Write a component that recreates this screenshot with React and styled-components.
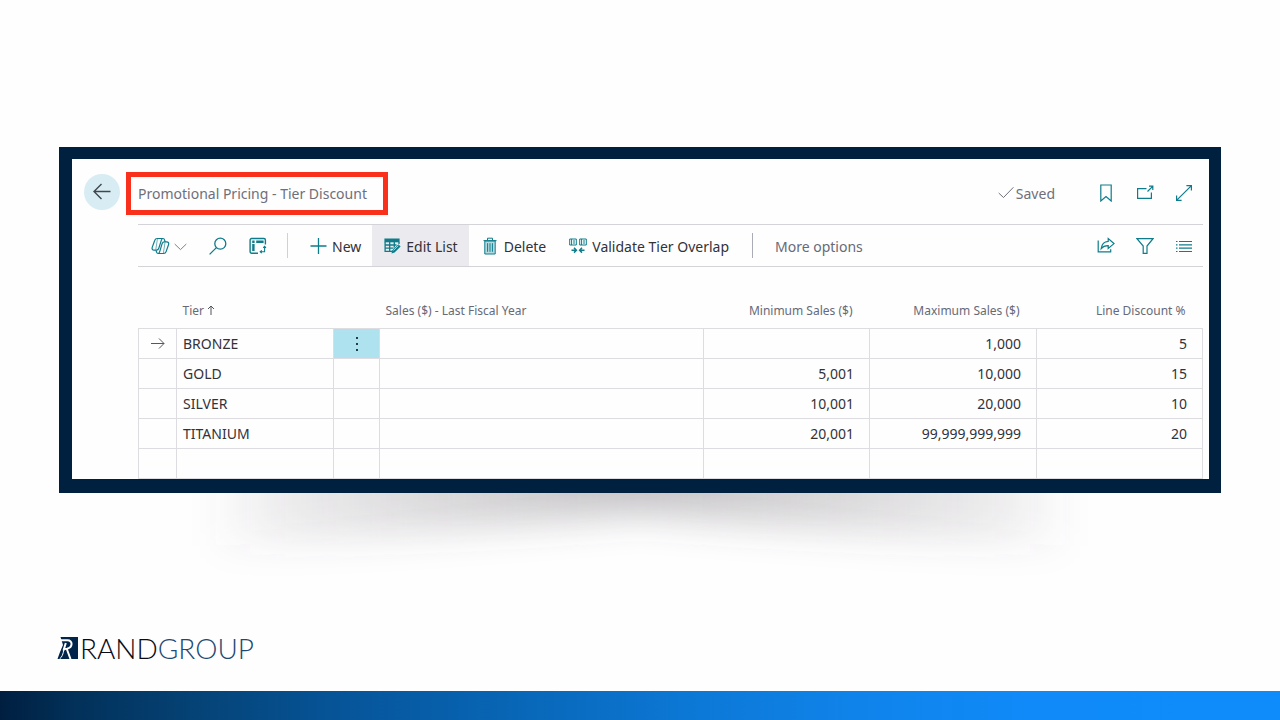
import React from 'react'
import styled, { createGlobalStyle } from 'styled-components'

const GlobalStyle = createGlobalStyle`
  * {
    box-sizing: border-box;
  }
  body {
    margin: 0;
    background: #fefefe;
    font-family: 'Noto Sans', 'Open Sans', sans-serif;
    font-size: 14px;
    color: #323239;
  }
`

const Page = styled.div`
  display: flex;
  flex-direction: column;
  min-height: 100vh;
  padding-top: 147px;
`

const Frame = styled.main`
  margin: 0 59px;
  border: solid #00203f;
  border-width: 12px 12px 14px 13px;
  background: #fefefe;
`

const TitleBar = styled.header`
  display: flex;
  align-items: center;
  height: 65px;
  padding: 0 16px 0 12px;
`

const BackButton = styled.button`
  display: flex;
  align-items: center;
  justify-content: center;
  width: 36px;
  height: 36px;
  margin-right: 6px;
  padding: 0;
  border: 0;
  border-radius: 50%;
  background: #d8ecf3;
  color: #41474d;
`

const Title = styled.h1`
  margin: 4px 0 0;
  padding: 0 16px 0 7px;
  border: 5px solid #f9301c;
  font-size: 14px;
  font-weight: 400;
  line-height: 33px;
  color: #6f6f7a;
`

const TitleActions = styled.div`
  display: flex;
  align-items: center;
  gap: 42px;
  margin-left: auto;
  padding-top: 3px;
`

const Status = styled.span`
  display: flex;
  align-items: center;
  gap: 2px;
  color: #6f6f7a;
`

const IconGroup = styled.div`
  display: flex;
  align-items: center;
  gap: 21px;
`

const IconButton = styled.button`
  display: flex;
  align-items: center;
  gap: 4px;
  padding: 0;
  border: 0;
  background: none;
  color: #0e7c8b;
`

const Content = styled.section`
  margin: 0 6px 0 66px;
`

const Toolbar = styled.div`
  display: flex;
  align-items: center;
  justify-content: space-between;
  height: 43px;
  padding-right: 10px;
  border: solid #d3d3d8;
  border-width: 1px 0;
`

const Actions = styled.div`
  display: flex;
  align-items: center;
  align-self: stretch;
`

const ToolGroup = styled.div`
  display: flex;
  align-items: center;
  gap: 22px;
  padding: 0 8px 0 13px;
`

const Divider = styled.span`
  width: 1px;
  height: 25px;
  margin: 0 10px 0 12px;
  background: ${(props) => props.$color || '#d0d0d6'};
`

const Action = styled.button`
  display: flex;
  align-items: center;
  gap: 5px;
  align-self: stretch;
  padding: 1px 11px 0 12px;
  border: 0;
  background: ${(props) => (props.$active ? '#ebeaef' : 'none')};
  font: inherit;
  color: ${(props) => (props.$muted ? '#666a78' : '#323239')};
  white-space: nowrap;

  svg {
    color: #0e7c8b;
  }
`

const Table = styled.table`
  width: 100%;
  margin-top: 27px;
  border-collapse: collapse;
  table-layout: fixed;
`

const Col = styled.col`
  width: ${(props) => props.$width};
`

const HeadCell = styled.th`
  height: 34px;
  padding: ${(props) => (props.$right ? '0 17px 0 0' : '0 0 0 6px')};
  text-align: ${(props) => (props.$right ? 'right' : 'left')};
  vertical-align: middle;
  font-size: 12px;
  font-weight: 400;
  line-height: 34px;
  color: #666a78;
  white-space: nowrap;
`

const Cell = styled.td`
  height: 30px;
  padding: ${(props) => (props.$right ? '0 15px 0 0' : '0 0 0 6px')};
  border: 1px solid #dddde1;
  text-align: ${(props) => (props.$right ? 'right' : 'left')};
  line-height: 29px;
`

const IconCell = styled(Cell)`
  padding: 0;
  text-align: center;
  background: ${(props) => (props.$selected ? '#aee2ee' : 'none')};

  svg {
    display: block;
    margin: auto;
  }
`

const MenuButton = styled.button`
  display: block;
  width: 100%;
  height: 29px;
  padding: 0;
  border: 0;
  background: none;
  color: #1f3d49;
`

const Shadow = styled.svg`
  display: block;
  width: 100%;
  height: 100px;
`

const Footer = styled.footer`
  margin-top: auto;
`

const Logo = styled.div`
  display: flex;
  align-items: center;
  gap: 1px;
  height: 30px;
  margin: 0 57px 28px;
  font-family: Lato, 'Liberation Sans', sans-serif;
  font-size: 28px;
  font-weight: 300;
  line-height: 30px;
  color: #0a0a12;
`

const LogoGroup = styled.span`
  color: #1d4a73;
`

const BottomBar = styled.div`
  height: 29px;
  background: linear-gradient(
    90deg,
    #001f40 0%,
    #02315a 6%,
    #054478 16%,
    #06559a 27%,
    #0866b6 40%,
    #0c78d6 54%,
    #1083ea 67%,
    #0f8af8 80%,
    #0f8cfb 100%
  );
`

const Icon = ({ w = 18, h = 18, stroke = 1, children }) => (
  <svg
    width={w}
    height={h}
    viewBox={`0 0 ${w} ${h}`}
    fill="none"
    stroke="currentColor"
    strokeWidth={stroke}
    aria-hidden="true"
  >
    {children}
  </svg>
)

const BackIcon = () => (
  <Icon stroke={1.4}>
    <path d="M17.500 8.500H1M8.500 1 1 8.500 8.500 16" />
  </Icon>
)

const CheckIcon = () => (
  <Icon w={16} h={14}>
    <path d="M.7 7 5.500 11.500 15.400 1.300" />
  </Icon>
)

const BookmarkIcon = () => (
  <Icon stroke={1.200}>
    <path d="M3.800 1h10.400v16L9 12.600 3.800 17z" />
  </Icon>
)

const PopoutIcon = () => (
  <Icon stroke={1.200}>
    <path d="M10.500 4.600H1.600v9.800h13.800V8.500M11.500 7.500l5.200-5.200M13 2.200h3.800V6" />
  </Icon>
)

const ExpandIcon = () => (
  <Icon stroke={1.200}>
    <path d="M1.800 16.200 16.200 1.800M11.400 1.600h5v5M1.600 11.400v5h5" />
  </Icon>
)

const CopilotIcon = () => (
  <Icon w={19} stroke={1.200}>
    <path d="M12 1.500H6.200C5 1.500 4.200 2.100 3.800 3.300L1.200 10.400c-.5 1.500.3 2.700 1.800 2.700h2.500c1.200 0 1.900-.7 2.300-1.900l2.500-7.800c.4-1.300.9-1.900 1.700-1.900s1.400.6 1.600 1.500l.5 1.800" />
    <path d="M7.200 16.500h5.500c1.200 0 2-.7 2.400-1.900l2.500-7.100c.5-1.500-.3-2.700-1.800-2.700h-2.400c-1.200 0-1.900.7-2.300 1.900l-2.400 7.900c-.3 1.200-.8 1.900-1.600 1.900s-1.300-.5-1.500-1.300l-.6-1.800" />
    <path d="M6.400 2 4.800 12.500M14 5.500 12.400 16" strokeWidth=".6" />
  </Icon>
)

const ChevronIcon = () => (
  <Icon w={13} h={14}>
    <path d="m.7 5 5.800 5.600L12.300 5" stroke="#7d8187" />
  </Icon>
)

const SearchIcon = () => (
  <Icon stroke={1.300}>
    <circle cx="11.300" cy="6.700" r="5.500" />
    <path d="M7.400 10.600.6 17.400" />
  </Icon>
)

const AnalyzeIcon = () => (
  <Icon stroke={1.400}>
    <path d="M9 16.300H2.600a1.500 1.500 0 0 1-1.500-1.500V3a1.500 1.500 0 0 1 1.500-1.500h12.300A1.500 1.500 0 0 1 16.400 3v4.500" />
    <path d="M3.200 4.700h2.400M7.200 4.700h7.400M4.400 7v7" strokeWidth="2.400" />
    <path d="M15.600 9.500v5.300h-4.300M14.200 10.900l1.400-1.500 1.400 1.500M12.800 13.400l-1.600 1.400 1.600 1.400" strokeWidth="1.100" />
  </Icon>
)

const PlusIcon = () => (
  <Icon w={17} stroke={1.300}>
    <path d="M8.500 1v16M.5 9h16" />
  </Icon>
)

const EditListIcon = () => (
  <Icon w={17}>
    <path d="M.4 1.500h15.200v3.800H.4z" fill="currentColor" stroke="none" />
    <path d="M1.100 5v9.300h7M1 8h11.500M1 11.200h8.500M5.700 5v9.300M10.300 5v5.500M15 5v2" strokeWidth="1.300" />
    <path d="m7.500 16.500.9-3.200 6-6 2.200 2.200-6 6z" fill="currentColor" stroke="none" />
    <path d="m9.500 13.500 4.800-4.800" stroke="#ebeaef" strokeWidth=".7" />
  </Icon>
)

const TrashIcon = () => (
  <Icon>
    <path d="M3.800 4h10.400v13H3.800z" fill="#b4dae0" />
    <path d="M2.500 3.600h13M6.500 3.400V1.200h5v2.200M6.600 6.200v8.600M9 6.200v8.600M11.400 6.200v8.600" />
  </Icon>
)

const OverlapIcon = () => (
  <Icon>
    <path d="M.7 2h6.600v6H.7zM10.700 2h6.600v6h-6.600zM2.600 2v6M12.600 2v6M4 4h2M4 6h2M14 4h2M14 6h2" />
    <path d="M2.500 13.200h4.800M5 10.800l2.400 2.400L5 15.600M15.500 13.200h-4.800M13 10.800l-2.400 2.400 2.400 2.400" strokeWidth="1.500" />
  </Icon>
)

const ShareIcon = () => (
  <Icon stroke={1.200}>
    <path d="M1.200 3.500v11.300h12.500v-2.600" />
    <path d="M4.200 11.600c.5-4 2.800-6.900 7-7.200V1.600l5.800 5-5.800 4.800V8.700c-3.200-.1-5.200.7-7 2.900z" />
  </Icon>
)

const FilterIcon = () => (
  <Icon stroke={1.200}>
    <path d="M1 1.700h16L11 9v7.300H7.200V9z" />
  </Icon>
)

const ListIcon = () => (
  <Icon stroke={1.200}>
    <path d="M1 4.500h1.500M4 4.500h13M1 7.800h1.500M4 7.800h13M1 11.200h1.500M4 11.200h13M1 14.500h1.500M4 14.500h13" />
  </Icon>
)

const RowArrowIcon = () => (
  <Icon w={14} h={14}>
    <path d="M0 6.500h13M8 1.500l5 5-5 5" stroke="#55595f" />
  </Icon>
)

const SortIcon = () => (
  <svg width="8" height="10" viewBox="0 0 8 10" fill="none" stroke="#50545c" aria-label="ascending">
    <path d="M4 10V1M1 4l3-3 3 3" />
  </svg>
)

const DotsIcon = () => (
  <Icon w={4} h={16}>
    <path d="M1 1h2v2H1zM1 7h2v2H1zM1 13h2v2H1z" fill="currentColor" stroke="none" />
  </Icon>
)

const LogoMark = () => (
  <svg width="22" height="24" viewBox="0 0 22 24" aria-hidden="true">
    <path d="M3.500 1H21v22H.5L3 16 6 9z" fill="#00244a" />
    <path d="M0 6h5L3 15 0 20z" fill="#fefefe" />
    <path d="M2.500 4.300h8c5.500 0 5.500 7.200-.5 8.400l-3.500.3" fill="none" stroke="#fefefe" strokeWidth="2" />
    <path d="M8.800 7 6.500 14.500M9.800 13l3.700 10" fill="none" stroke="#fefefe" strokeWidth="2" />
    <path d="M6.800 13.500Q6 20.500 2.500 23" fill="none" stroke="#fefefe" strokeWidth="1" />
  </svg>
)

const tiers = [
  { name: 'BRONZE', min: '', max: '1,000', discount: '5' },
  { name: 'GOLD', min: '5,001', max: '10,000', discount: '15' },
  { name: 'SILVER', min: '10,001', max: '20,000', discount: '10' },
  { name: 'TITANIUM', min: '20,001', max: '99,999,999,999', discount: '20' },
  { name: '', min: '', max: '', discount: '' },
]

function TierTable() {
  return (
    <Table>
      <colgroup>
        <Col $width="38px" />
        <Col $width="157px" />
        <Col $width="46px" />
        <Col />
        <Col $width="166px" />
        <Col $width="167px" />
        <Col $width="166px" />
      </colgroup>
      <thead>
        <tr>
          <HeadCell />
          <HeadCell>
            Tier <SortIcon />
          </HeadCell>
          <HeadCell />
          <HeadCell>Sales ($) - Last Fiscal Year</HeadCell>
          <HeadCell $right>Minimum Sales ($)</HeadCell>
          <HeadCell $right>Maximum Sales ($)</HeadCell>
          <HeadCell $right>Line Discount %</HeadCell>
        </tr>
      </thead>
      <tbody>
        {tiers.map((tier, i) => (
          <tr key={i}>
            <IconCell>{i === 0 && <RowArrowIcon />}</IconCell>
            <Cell>{tier.name}</Cell>
            <IconCell $selected={i === 0}>
              {i === 0 && (
                <MenuButton aria-label="Show more options">
                  <DotsIcon />
                </MenuButton>
              )}
            </IconCell>
            <Cell />
            <Cell $right>{tier.min}</Cell>
            <Cell $right>{tier.max}</Cell>
            <Cell $right>{tier.discount}</Cell>
          </tr>
        ))}
      </tbody>
    </Table>
  )
}

function FrameShadow() {
  return (
    <Shadow viewBox="0 0 1280 100" preserveAspectRatio="none" aria-hidden="true">
      <defs>
        <linearGradient id="shade" x1="200" x2="1080" y1="0" y2="0" gradientUnits="userSpaceOnUse">
          <stop offset="0" stopColor="#5a565e" stopOpacity="0" />
          <stop offset=".1" stopColor="#5a565e" stopOpacity=".11" />
          <stop offset=".3" stopColor="#5a565e" stopOpacity=".24" />
          <stop offset=".5" stopColor="#5a565e" stopOpacity=".36" />
          <stop offset=".7" stopColor="#5a565e" stopOpacity=".24" />
          <stop offset=".9" stopColor="#5a565e" stopOpacity=".11" />
          <stop offset="1" stopColor="#5a565e" stopOpacity="0" />
        </linearGradient>
        <filter id="soften" x="0" y="-90" width="1280" height="230" filterUnits="userSpaceOnUse">
          <feGaussianBlur stdDeviation="12 18" />
        </filter>
      </defs>
      <path d="M200-80H1080V54Q860 40 640 20 420 40 200 54z" fill="url(#shade)" filter="url(#soften)" />
    </Shadow>
  )
}

function App() {
  return (
    <>
      <GlobalStyle />
      <Page>
        <Frame>
          <TitleBar>
            <BackButton aria-label="Back">
              <BackIcon />
            </BackButton>
            <Title>Promotional Pricing - Tier Discount</Title>
            <TitleActions>
              <Status>
                <CheckIcon />
                Saved
              </Status>
              <IconGroup>
                <IconButton aria-label="Bookmark">
                  <BookmarkIcon />
                </IconButton>
                <IconButton aria-label="Open in new window">
                  <PopoutIcon />
                </IconButton>
                <IconButton aria-label="Expand">
                  <ExpandIcon />
                </IconButton>
              </IconGroup>
            </TitleActions>
          </TitleBar>
          <Content>
            <Toolbar>
              <Actions>
                <ToolGroup>
                  <IconButton aria-label="Copilot">
                    <CopilotIcon />
                    <ChevronIcon />
                  </IconButton>
                  <IconButton aria-label="Search">
                    <SearchIcon />
                  </IconButton>
                  <IconButton aria-label="Analyze">
                    <AnalyzeIcon />
                  </IconButton>
                </ToolGroup>
                <Divider />
                <Action>
                  <PlusIcon />
                  New
                </Action>
                <Action $active>
                  <EditListIcon />
                  Edit List
                </Action>
                <Action>
                  <TrashIcon />
                  Delete
                </Action>
                <Action>
                  <OverlapIcon />
                  Validate Tier Overlap
                </Action>
                <Divider $color="#a9abb5" />
                <Action $muted>More options</Action>
              </Actions>
              <IconGroup>
                <IconButton aria-label="Share">
                  <ShareIcon />
                </IconButton>
                <IconButton aria-label="Filter">
                  <FilterIcon />
                </IconButton>
                <IconButton aria-label="Show as list">
                  <ListIcon />
                </IconButton>
              </IconGroup>
            </Toolbar>
            <TierTable />
          </Content>
        </Frame>
        <FrameShadow />
        <Footer>
          <Logo>
            <LogoMark />
            <span>
              RAND<LogoGroup>GROUP</LogoGroup>
            </span>
          </Logo>
          <BottomBar />
        </Footer>
      </Page>
    </>
  )
}

export default App
